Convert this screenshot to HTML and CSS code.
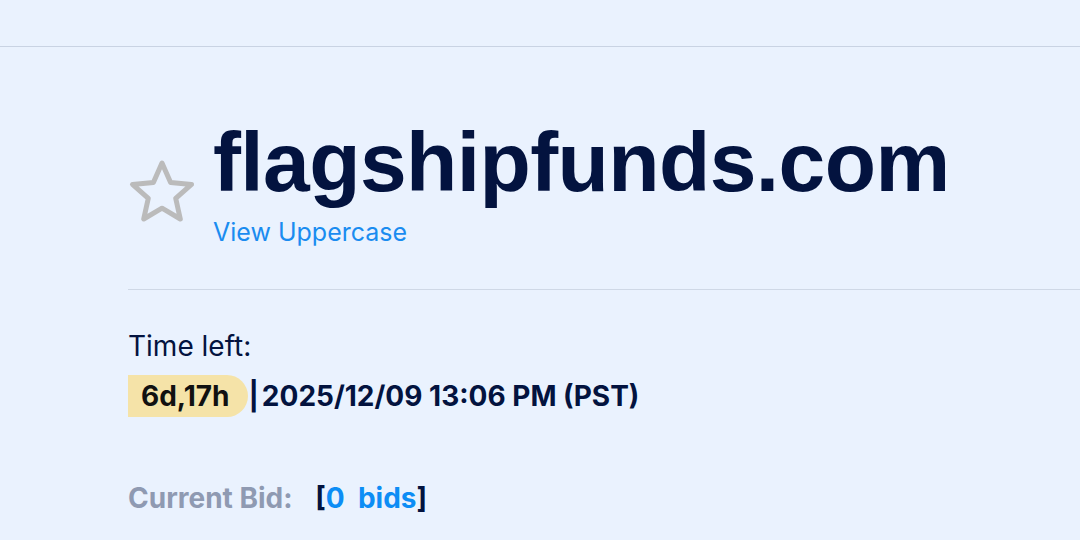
FILE: index.html
```html
<!DOCTYPE html>
<html>
<head>
<meta charset="utf-8">
<link rel="stylesheet" href="styles.css">
</head>
<body>
<div class="topbar"></div>
<main class="content">
  <div class="head">
    <svg class="star" width="68" height="66" viewBox="0 0 68 66">
      <polygon points="34,4 42.6,23.5 63.5,25.4 47.7,39.3 52.3,60 34,49.2 15.7,60 20.3,39.3 4.5,25.4 25.4,23.5" fill="none" stroke="#bbbbbb" stroke-width="5" stroke-linejoin="round"/>
    </svg>
    <div class="titles">
      <h1 class="domain">flagshipfunds.com</h1>
      <a class="upper" href="#">View Uppercase</a>
    </div>
  </div>
  <hr class="divider">
  <div class="time">
    <div class="label">Time left:</div>
    <div class="timerow"><span class="badge">6d,17h</span><span class="pipe">|</span><span class="date">2025/12/09 13:06 PM (PST)</span></div>
  </div>
  <div class="bid">
    <span class="bidlabel">Current Bid:</span>
    <span class="bids">[<span class="blue">0&nbsp; bids</span>]</span>
  </div>
</main>
</body>
</html>
```
FILE: styles.css
```css
html, body { margin: 0; padding: 0; }
body {
  background: #eaf2fe;
  font-family: Inter, "Liberation Sans", sans-serif;
  color: #03133f;
  width: 1080px;
  height: 540px;
  overflow: hidden;
}
.topbar {
  height: 46px;
  border-bottom: 1px solid #c9d3e3;
}
.content {
  padding-left: 128px;
}
.head {
  display: flex;
  align-items: flex-start;
  padding-top: 66px;
  gap: 17px;
}
.star { margin-top: 46px; flex: none; }
.titles { display: flex; flex-direction: column; }
.domain {
  margin: 0;
  font-family: "Liberation Sans", Arial, sans-serif;
  font-weight: bold;
  font-size: 84px;
  line-height: 98px;
  color: #03133f;
  letter-spacing: -0.6px;
}
.upper {
  color: #1a8cf0;
  text-decoration: none;
  font-size: 25px;
  line-height: 30px;
  margin-top: 6px;
}
.divider {
  border: 0;
  border-top: 1px solid #cfd8e6;
  margin: 42px 0 0 0;
}
.time { padding-top: 38px; }
.label { font-size: 28px; line-height: 36px; }
.timerow { display: flex; align-items: center; margin-top: 11px; }
.badge {
  background: #f5e3a8;
  font-weight: bold;
  font-size: 28px;
  line-height: 42px;
  padding: 0 19px 0 13px;
  border-radius: 0 22px 22px 0;
  color: #111;
}
.pipe {
  font-weight: bold;
  font-size: 28px;
  margin-left: 0;
}
.date {
  font-weight: bold;
  font-size: 28px;
  margin-left: 3px;
}
.bid { margin-top: 64px; font-size: 28px; line-height: 34px; font-weight: bold; }
.bidlabel { color: #8f9ab2; margin-right: 16px; }
.bids { color: #03133f; }
.blue { color: #0d8df5; }
```
